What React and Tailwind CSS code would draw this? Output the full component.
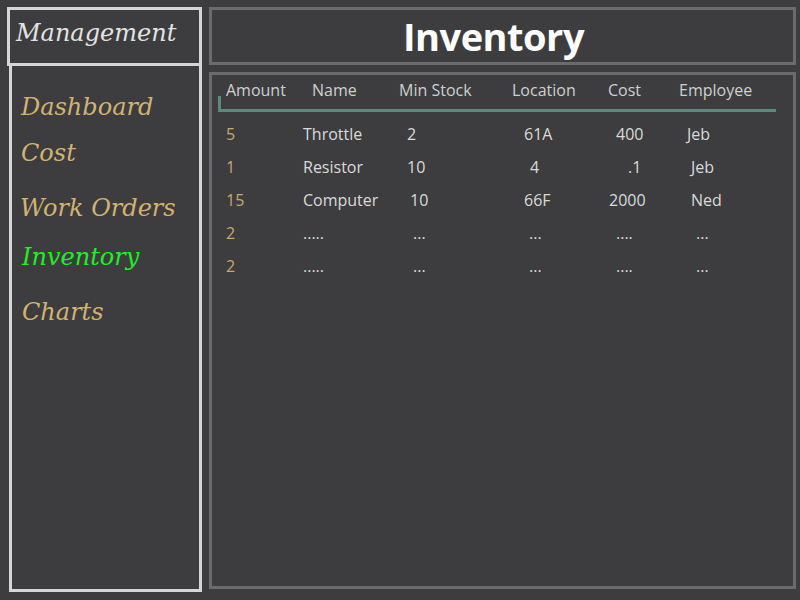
import React from "react";

const navItems = [
  { label: "Dashboard", cls: "h-[40px] pl-[9px] text-[#d3b26f]" },
  { label: "Cost", cls: "h-[52px] pl-[9px] text-[#d3b26f]" },
  { label: "Work Orders", cls: "h-[58px] pl-[8px] text-[#d3b26f]" },
  { label: "Inventory", cls: "h-[40px] pl-[10px] text-[#22ee22]" },
  { label: "Charts", cls: "h-[70px] pl-[10px] text-[#d3b26f]" }
];

const headers = [
  { label: "Amount", w: "w-[86px]" },
  { label: "Name", w: "w-[87px]" },
  { label: "Min Stock", w: "w-[113px]" },
  { label: "Location", w: "w-[96px]" },
  { label: "Cost", w: "w-[71px]" },
  { label: "Employee", w: "w-[100px]" }
];

const colWidths = ["w-[77px]", "w-[104px]", "w-[117px]", "w-[85px]", "w-[78px]", "w-[90px]"];

// each cell: [text, left offset class]
const rows = [
  [["5", "pl-0"], ["Throttle", "pl-0"], ["2", "pl-0"], ["61A", "pl-0"], ["400", "pl-[7px]"], ["Jeb", "pl-0"]],
  [["1", "pl-0"], ["Resistor", "pl-0"], ["10", "pl-0"], ["4", "pl-[6px]"], [".1", "pl-[19px]"], ["Jeb", "pl-[4px]"]],
  [["15", "pl-0"], ["Computer", "pl-0"], ["10", "pl-[3px]"], ["66F", "pl-0"], ["2000", "pl-0"], ["Ned", "pl-[4px]"]],
  [["2", "pl-0"], [".....", "pl-0"], ["...", "pl-[6px]"], ["...", "pl-[5px]"], ["....", "pl-[7px]"], ["...", "pl-[9px]"]],
  [["2", "pl-0"], [".....", "pl-0"], ["...", "pl-[6px]"], ["...", "pl-[5px]"], ["....", "pl-[7px]"], ["...", "pl-[9px]"]]
];

export default function App() {
  return (
    <div className="w-[800px] h-[600px] bg-[#3d3d3f] flex overflow-hidden">
      {/* sidebar */}
      <div className="ml-[7px] mt-[7px] w-[195px] h-[585px] flex flex-col font-['DejaVu_Serif',serif] italic">
        <div className="h-[59px] border-[3px] border-[#d6d6d6] flex items-center pl-[6px] pb-[8px] text-[24px] text-[#e2e2e2] shrink-0">
          Management
        </div>
        <div className="flex-1 ml-[2px] border-x-[3px] border-b-[3px] border-[#d6d6d6] pt-[21px] flex flex-col">
          {navItems.map((item) => (
            <div key={item.label} className={`flex items-center text-[24px] ${item.cls}`}>
              {item.label}
            </div>
          ))}
        </div>
      </div>

      {/* main */}
      <div className="ml-[7px] mt-[7px] w-[587px] flex flex-col font-['Open_Sans',sans-serif]">
        <div className="h-[58px] border-[3px] border-[#6b6b6b] flex items-center justify-center pr-[18px]">
          <span className="text-[38px] font-bold text-white tracking-[-0.5px]">Inventory</span>
        </div>
        <div className="mt-[7px] h-[517px] border-[3px] border-[#6b6b6b] pt-[5px]">
          <div className="flex pl-[14px] h-[20px] items-center text-[16px] text-[#cfcfcf]">
            {headers.map((h) => (
              <div key={h.label} className={`${h.w} shrink-0 whitespace-nowrap`}>
                {h.label}
              </div>
            ))}
          </div>
          <div className="ml-[6px] -mt-[4px] w-[558px] h-[16px] border-l-[3px] border-b-[3px] border-[#5b8a7b]" />
          <div className="mt-[5px]">
            {rows.map((row, i) => (
              <div key={i} className="flex pl-[14px] h-[33px] items-center text-[16px]">
                {row.map(([text, off], j) => (
                  <div
                    key={j}
                    className={`${colWidths[j]} ${off} shrink-0 whitespace-nowrap ${j === 0 ? "text-[#c9a86c]" : "text-[#dadada]"}`}
                  >
                    {text}
                  </div>
                ))}
              </div>
            ))}
          </div>
        </div>
      </div>
    </div>
  );
}
